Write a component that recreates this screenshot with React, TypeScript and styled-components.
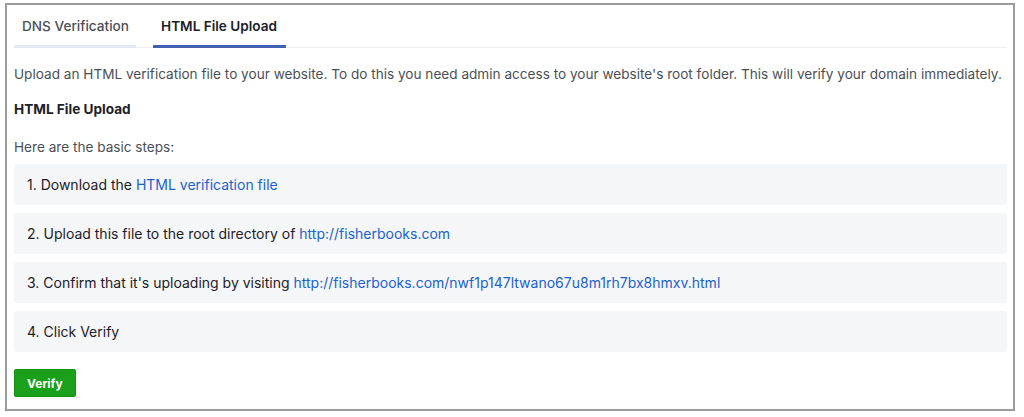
import React from 'react';
import styled, { createGlobalStyle } from 'styled-components';

const GlobalStyle = createGlobalStyle`
  html, body {
    margin: 0;
    padding: 0;
    background: #ffffff;
  }
  body {
    font-family: Inter, "Liberation Sans", Arial, sans-serif;
    -webkit-font-smoothing: antialiased;
  }
`;

const Frame = styled.div`
  box-sizing: border-box;
  margin: 3px 0 0 5px;
  width: 1010px;
  height: 408px;
  border: 2px solid #9b9b9b;
  padding: 0 6px 0 7px;
  background: #fff;
`;

const TabBar = styled.div`
  display: flex;
  gap: 17px;
  border-bottom: 1px solid #eceef1;
`;

const Tab = styled.div<{ $active?: boolean }>`
  box-sizing: border-box;
  height: 43px;
  padding: 2px ${p => (p.$active ? '9px' : '7px')} 0 ${p => (p.$active ? '8px' : '8px')};
  display: flex;
  align-items: center;
  font-size: 13.6px;
  font-weight: ${p => (p.$active ? 600 : 500)};
  color: ${p => (p.$active ? '#1d2129' : '#4b4f56')};
  border-bottom: 3px solid ${p => (p.$active ? '#4060b0' : '#e4e9f2')};
  margin-bottom: -1px;
`;

const Intro = styled.p`
  margin: 17px 0 0;
  font-size: 13.6px;
  line-height: 18px;
  color: #4b4f56;
  white-space: nowrap;
`;

const Heading = styled.h3`
  margin: 17px 0 0;
  font-size: 13.6px;
  line-height: 18px;
  font-weight: 700;
  color: #1d2129;
`;

const Lead = styled.p`
  margin: 20px 0 0;
  font-size: 13.6px;
  line-height: 18px;
  color: #4b4f56;
`;

const Steps = styled.ol`
  list-style: none;
  margin: 8px 0 0;
  padding: 0;
  display: flex;
  flex-direction: column;
  gap: 8px;
`;

const Step = styled.li`
  box-sizing: border-box;
  height: 41px;
  display: flex;
  align-items: center;
  padding: 0 13px;
  border-radius: 3px;
  background: #f5f6f7;
  font-size: 14px;
  color: #1d2129;
  white-space: pre;
`;

const Link = styled.a`
  color: #2061cf;
  text-decoration: none;
`;

const VerifyButton = styled.button`
  margin-top: 17px;
  height: 28px;
  padding: 0 12px;
  border: 1px solid #168f12;
  border-radius: 2px;
  background: #1aa01a;
  color: #fff;
  font-family: inherit;
  font-size: 12px;
  font-weight: 700;
  cursor: pointer;
`;

const steps: { text: string; link?: string }[] = [
  { text: '1. Download the ', link: 'HTML verification file' },
  { text: '2. Upload this file to the root directory of ', link: 'http://fisherbooks.com' },
  {
    text: "3. Confirm that it's uploading by visiting ",
    link: 'http://fisherbooks.com/nwf1p147ltwano67u8m1rh7bx8hmxv.html',
  },
  { text: '4. Click Verify' },
];

export default function App() {
  return (
    <>
      <GlobalStyle />
      <Frame>
        <TabBar>
          <Tab>DNS Verification</Tab>
          <Tab $active>HTML File Upload</Tab>
        </TabBar>
        <Intro>
          Upload an HTML verification file to your website. To do this you need admin access to your
          website's root folder. This will verify your domain immediately.
        </Intro>
        <Heading>HTML File Upload</Heading>
        <Lead>Here are the basic steps:</Lead>
        <Steps>
          {steps.map(s => (
            <Step key={s.text}>
              {s.text}
              {s.link && <Link href="#">{s.link}</Link>}
            </Step>
          ))}
        </Steps>
        <VerifyButton>Verify</VerifyButton>
      </Frame>
    </>
  );
}
